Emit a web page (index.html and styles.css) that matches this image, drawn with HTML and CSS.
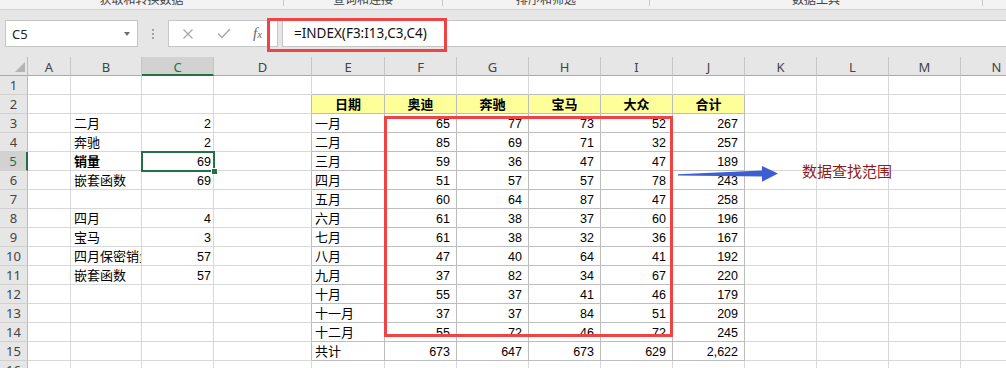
FILE: index.html
```html
<!DOCTYPE html>
<html lang="zh-CN">
<head>
  <meta charset="UTF-8">
  <title>INDEX 嵌套函数</title>
  <link rel="stylesheet" href="styles.css">
</head>
<body>

  <div class="ribbon">
    <div class="grp g1"><span>获取和转换数据</span></div>
    <div class="grp g2"><span>查询和连接</span></div>
    <div class="grp g3"><span>排序和筛选</span></div>
    <div class="grp g4"><span>数据工具</span></div>
    <div class="grp g5"></div>
  </div>

  <div class="fbar">
    <div class="namebox"><span>C5</span><i class="caret"></i></div>
    <div class="grip"><i></i><i></i><i></i></div>
    <div class="fbtns">
      <svg class="ico x" width="10" height="10" viewBox="0 0 10 10"><path d="M0.5 0.5 L9.5 9.5 M9.5 0.5 L0.5 9.5" stroke="#a8a8a8" stroke-width="1.3" fill="none"/></svg>
      <svg class="ico ok" width="14" height="11" viewBox="0 0 14 11"><path d="M1 5.5 L5 9.5 L13 1" stroke="#a8a8a8" stroke-width="1.5" fill="none"/></svg>
      <span class="fx">f<small>x</small></span>
    </div>
    <div class="formula">=INDEX(F3:I13,C3,C4)</div>
  </div>
  <div class="fhl"></div>

  <div class="sheet">
    <div class="grid">
      <div class="corner"><i></i></div><div class="ch">A</div><div class="ch">B</div><div class="ch sel">C</div><div class="ch">D</div><div class="ch">E</div><div class="ch">F</div><div class="ch">G</div><div class="ch">H</div><div class="ch">I</div><div class="ch">J</div><div class="ch">K</div><div class="ch">L</div><div class="ch">M</div><div class="ch">N</div>

      <div class="rh">1</div><div></div><div></div><div></div><div></div><div class="tt"></div><div class="tt"></div><div class="tt"></div><div class="tt"></div><div class="tt"></div><div class="tt"></div><div></div><div></div><div></div><div></div>
      <div class="rh">2</div><div></div><div></div><div></div><div class="tl"></div><div class="th">日期</div><div class="th">奥迪</div><div class="th">奔驰</div><div class="th">宝马</div><div class="th">大众</div><div class="th">合计</div><div></div><div></div><div></div><div></div>
      <div class="rh">3</div><div></div><div>二月</div><div class="n">2</div><div class="tl"></div><div class="tb">一月</div><div class="tb tn">65</div><div class="tb tn">77</div><div class="tb tn">73</div><div class="tb tn">52</div><div class="tb tn">267</div><div></div><div></div><div></div><div></div>
      <div class="rh">4</div><div></div><div>奔驰</div><div class="n">2</div><div class="tl"></div><div class="tb">二月</div><div class="tb tn">85</div><div class="tb tn">69</div><div class="tb tn">71</div><div class="tb tn">32</div><div class="tb tn">257</div><div></div><div></div><div></div><div></div>
      <div class="rh sel">5</div><div></div><div class="b">销量</div><div class="n act">69</div><div class="tl"></div><div class="tb">三月</div><div class="tb tn">59</div><div class="tb tn">36</div><div class="tb tn">47</div><div class="tb tn">47</div><div class="tb tn">189</div><div></div><div></div><div></div><div></div>
      <div class="rh">6</div><div></div><div>嵌套函数</div><div class="n">69</div><div class="tl"></div><div class="tb">四月</div><div class="tb tn">51</div><div class="tb tn">57</div><div class="tb tn">57</div><div class="tb tn">78</div><div class="tb tn">243</div><div></div><div></div><div></div><div></div>
      <div class="rh">7</div><div></div><div></div><div></div><div class="tl"></div><div class="tb">五月</div><div class="tb tn">60</div><div class="tb tn">64</div><div class="tb tn">87</div><div class="tb tn">47</div><div class="tb tn">258</div><div></div><div></div><div></div><div></div>
      <div class="rh">8</div><div></div><div>四月</div><div class="n">4</div><div class="tl"></div><div class="tb">六月</div><div class="tb tn">61</div><div class="tb tn">38</div><div class="tb tn">37</div><div class="tb tn">60</div><div class="tb tn">196</div><div></div><div></div><div></div><div></div>
      <div class="rh">9</div><div></div><div>宝马</div><div class="n">3</div><div class="tl"></div><div class="tb">七月</div><div class="tb tn">61</div><div class="tb tn">38</div><div class="tb tn">32</div><div class="tb tn">36</div><div class="tb tn">167</div><div></div><div></div><div></div><div></div>
      <div class="rh">10</div><div></div><div>四月保密销量</div><div class="n">57</div><div class="tl"></div><div class="tb">八月</div><div class="tb tn">47</div><div class="tb tn">40</div><div class="tb tn">64</div><div class="tb tn">41</div><div class="tb tn">192</div><div></div><div></div><div></div><div></div>
      <div class="rh">11</div><div></div><div>嵌套函数</div><div class="n">57</div><div class="tl"></div><div class="tb">九月</div><div class="tb tn">37</div><div class="tb tn">82</div><div class="tb tn">34</div><div class="tb tn">67</div><div class="tb tn">220</div><div></div><div></div><div></div><div></div>
      <div class="rh">12</div><div></div><div></div><div></div><div class="tl"></div><div class="tb">十月</div><div class="tb tn">55</div><div class="tb tn">37</div><div class="tb tn">41</div><div class="tb tn">46</div><div class="tb tn">179</div><div></div><div></div><div></div><div></div>
      <div class="rh">13</div><div></div><div></div><div></div><div class="tl"></div><div class="tb">十一月</div><div class="tb tn">37</div><div class="tb tn">37</div><div class="tb tn">84</div><div class="tb tn">51</div><div class="tb tn">209</div><div></div><div></div><div></div><div></div>
      <div class="rh">14</div><div></div><div></div><div></div><div class="tl"></div><div class="tb">十二月</div><div class="tb tn">55</div><div class="tb tn">72</div><div class="tb tn">46</div><div class="tb tn">72</div><div class="tb tn">245</div><div></div><div></div><div></div><div></div>
      <div class="rh">15</div><div></div><div></div><div></div><div class="tl"></div><div class="tb">共计</div><div class="tb tn">673</div><div class="tb tn">647</div><div class="tb tn">673</div><div class="tb tn">629</div><div class="tb tn">2,622</div><div></div><div></div><div></div><div></div>
      <div class="rh">16</div><div></div><div></div><div></div><div></div><div></div><div></div><div></div><div></div><div></div><div></div><div></div><div></div><div></div><div></div>
    </div>

    <!-- shapes drawn on top of the sheet -->
    <div class="range"></div>
    <svg class="arrow" width="106" height="28" viewBox="0 0 106 28">
      <polygon points="2,16.2 86,12.6 86,8 102,15.4 86,23.8 86,18.4 2,17.6" fill="#3b5ed6"/>
    </svg>
    <div class="note">数据查找范围</div>
  </div>

</body>
</html>
```

FILE: styles.css
```css
body {
  margin: 0;
  width: 1006px;
  height: 368px;
  overflow: hidden;
  position: relative;
  background: #e6e6e6;
  font-family: "Liberation Sans", "Noto Sans CJK SC", sans-serif;
  color: #000;
}

/* ribbon group captions, cut off at the top */
.ribbon {
  display: flex;
  align-items: flex-start;
  height: 9px;
  background: #f3f3f3;
  border-bottom: 1px solid #d4d4d4;
  overflow: hidden;
}

.grp {
  box-sizing: border-box;
  height: 6px;
  border-right: 1px solid #c8c8c8;
  text-align: center;
  font-family: "Noto Sans CJK SC", sans-serif;
  font-size: 12px;
  line-height: 12px;
  color: #444;
}

.grp span {
  display: block;
  margin-top: -7px;
}

.g1 { width: 284px; }
.g2 { width: 159px; }
.g3 { width: 207px; }
.g4 { width: 333px; }
.g5 { flex: 1; border: none; }

/* formula bar */
.fbar {
  display: flex;
  height: 27px;
  padding: 10px 0;
}

.namebox {
  box-sizing: border-box;
  width: 133px;
  margin-left: 5px;
  background: #fff;
  border: 1px solid #c6c6c6;
  display: flex;
  align-items: center;
  justify-content: space-between;
  padding: 0 7px 0 6px;
  font-family: "Noto Sans", sans-serif;
  font-size: 13px;
  color: #222;
}

.caret {
  width: 0;
  height: 0;
  border-left: 3px solid transparent;
  border-right: 3px solid transparent;
  border-top: 4px solid #6f6f6f;
}

.grip {
  width: 30px;
  display: flex;
  flex-direction: column;
  align-items: center;
  justify-content: center;
  gap: 2px;
}

.grip i {
  width: 2px;
  height: 2px;
  background: #a2a2a2;
}

.fbtns {
  box-sizing: border-box;
  width: 110px;
  background: #fff;
  border: 1px solid #c6c6c6;
  display: flex;
  align-items: center;
  padding-left: 14px;
}

.ico.ok { margin-left: 24px; }

.fx {
  margin-left: 22px;
  font-family: "Liberation Serif", serif;
  font-style: italic;
  font-size: 15px;
  color: #6a6a6a;
}

.fx small {
  font-size: 11px;
}

.formula {
  flex: 1;
  margin-left: 4px;
  background: #fff;
  border: 1px solid #c6c6c6;
  border-right: none;
  padding-left: 11px;
  font-family: "Noto Sans", sans-serif;
  font-size: 13.5px;
  line-height: 25px;
  color: #111;
}

.fhl {
  position: absolute;
  left: 267px;
  top: 18px;
  width: 180px;
  height: 34px;
  box-sizing: border-box;
  border: 3px solid #f04343;
}

/* sheet */
.sheet {
  position: relative;
  background: #fff;
}

.grid {
  display: grid;
  grid-template-columns: 28px 43px 71px 72px 98px 73px repeat(9, 72px);
  grid-auto-rows: 19px;
}

.grid > div {
  box-sizing: border-box;
  border-right: 1px solid #d8d8d8;
  border-bottom: 1px solid #d8d8d8;
  padding-left: 3px;
  font-size: 13px;
  line-height: 20px;
  white-space: nowrap;
  overflow: hidden;
}

.grid > .corner {
  background: #e6e6e6;
  border-right-color: #bcbcbc;
  border-bottom-color: #ababab;
  display: flex;
  align-items: flex-end;
  justify-content: flex-end;
  padding: 0 2px 3px 0;
}

.corner i {
  width: 0;
  height: 0;
  border-left: 10px solid transparent;
  border-bottom: 10px solid #b4b4b4;
}

.grid > .ch {
  background: #e6e6e6;
  border-right-color: #c6c6c6;
  border-bottom-color: #ababab;
  text-align: center;
  padding: 0;
  font-family: "Noto Sans", sans-serif;
  font-size: 13px;
  line-height: 21px;
  color: #444;
}

.grid > .ch.sel {
  background: #d2d2d2;
  border-bottom: 2px solid #217346;
  color: #217346;
}

.grid > .rh {
  background: #e6e6e6;
  border-right-color: #bcbcbc;
  border-bottom-color: #d0d0d0;
  text-align: center;
  padding: 0;
  font-family: "Noto Sans", sans-serif;
  font-size: 13px;
  line-height: 19px;
  color: #444;
}

.grid > .rh.sel {
  background: #d2d2d2;
  border-right: 2px solid #217346;
  color: #217346;
}

.grid > .n {
  text-align: right;
  padding-right: 2px;
  font-size: 12.5px;
}

.grid > .b {
  font-weight: bold;
}

.grid > .act {
  position: relative;
  overflow: visible;
  outline: 2px solid #217346;
  outline-offset: -1px;
  z-index: 1;
}

.act::after {
  content: "";
  position: absolute;
  right: -5px;
  bottom: -5px;
  width: 5px;
  height: 5px;
  background: #217346;
  border: 1px solid #fff;
}

/* the sales table E2:J15 */
.grid > .tt { border-bottom-color: #bdbdbd; }
.grid > .tl { border-right-color: #bdbdbd; }

.grid > .tb,
.grid > .th {
  border-right-color: #bdbdbd;
  border-bottom-color: #bdbdbd;
}

.grid > .th {
  background: #ffff99;
  text-align: center;
  font-weight: bold;
  padding: 0;
}

.grid > .tn {
  text-align: right;
  padding-right: 6px;
  font-size: 12.5px;
}

.range {
  position: absolute;
  left: 384px;
  top: 59px;
  width: 289px;
  height: 221px;
  box-sizing: border-box;
  border: 3px solid #f04343;
}

.arrow {
  position: absolute;
  left: 676px;
  top: 101px;
}

.note {
  position: absolute;
  left: 802px;
  top: 105px;
  font-family: "Noto Sans CJK SC", sans-serif;
  font-size: 15px;
  line-height: 18px;
  color: #8e1b1b;
}
```
